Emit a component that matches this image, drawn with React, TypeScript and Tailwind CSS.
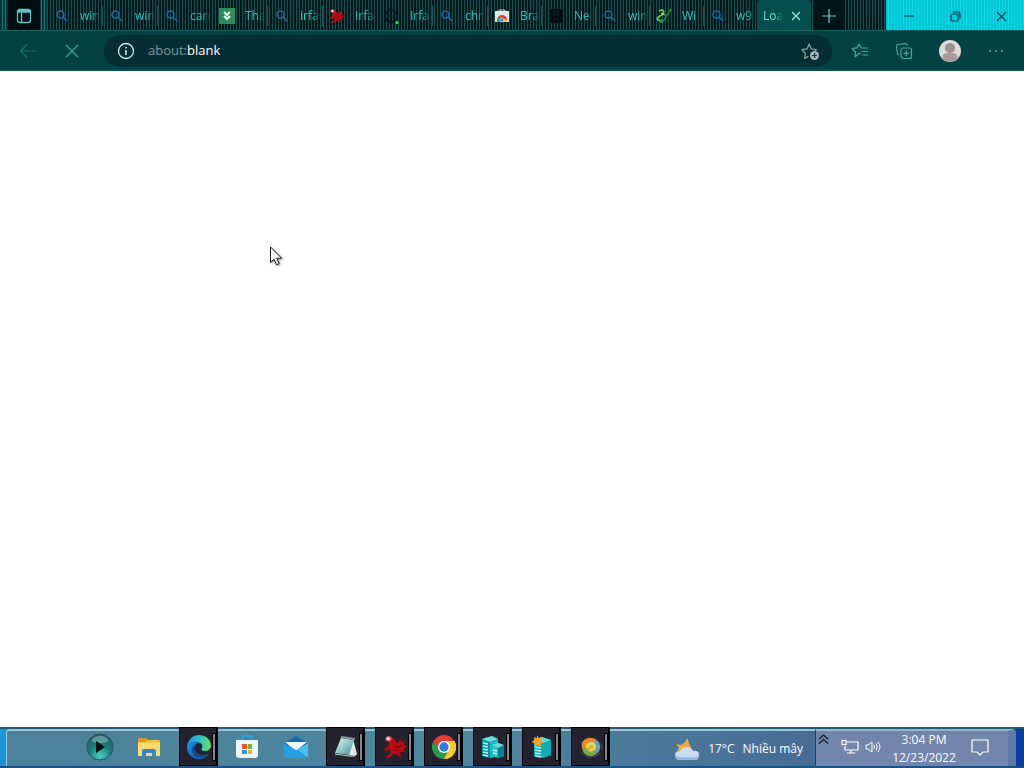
import React from 'react';

type Tab = { title: string; icon: string; wide?: boolean };

const TABS: Tab[] = [
	{ title: 'win', icon: 'search', wide: true },
	{ title: 'win', icon: 'search', wide: true },
	{ title: 'can', icon: 'search', wide: true },
	{ title: 'Tha', icon: 'down', wide: true },
	{ title: 'irfa', icon: 'search', wide: true },
	{ title: 'Irfa', icon: 'cat', wide: true },
	{ title: 'Irfa', icon: 'dot', wide: true },
	{ title: 'chr', icon: 'search', wide: true },
	{ title: 'Bra', icon: 'webstore' },
	{ title: 'Ne', icon: 'dark' },
	{ title: 'win', icon: 'search' },
	{ title: 'Wi', icon: 'leaf' },
	{ title: 'w9', icon: 'search' },
];

const CatShape = () => (
	<>
		<path d="M3 5c1-3 5-3 7-1 2 1 2 4 4 5l3-4 1 3 3-2-1 4 3 2-3 2 1 3-3 0c-1 1-2 1-3 1l3 3-2 1-4-3-3 1c-1 2-3 3-5 3l-1-2 4-2 1-3-3-1-3 2-1-2 3-3 2-1-1-3z" fill="#b90c10" />
		<path d="M2 5c0-3 4-4 6-2 1 2 0 4-2 4s-3 0-4-2z" fill="#d8545a" />
		<circle cx="5" cy="4.500" r="1.500" fill="#fff" />
		<path d="M10 11l4 2 5-2M11 15l3 1" stroke="#7a060a" fill="none" />
	</>
);

const TabIcon: React.FC<{ name: string }> = ({ name }) => {
	switch (name) {
		case 'search':
			return <svg width="16" height="16" viewBox="0 0 16 16" fill="none" stroke="#2268b0" strokeWidth="1.5"><circle cx="6.5" cy="6.5" r="3.5" /><path d="M9.2 9.2l4 4" /></svg>;
		case 'down':
			return <svg width="16" height="16" viewBox="0 0 16 16"><path d="M0 0h16v16H0z" fill="#2e8b57" /><path d="M5 4l3 3 3-3M5 8l3 3 3-3" stroke="#e5ffe9" strokeWidth="2" fill="none" /></svg>;
		case 'cat':
			return <svg width="16" height="16" viewBox="0 0 24 24"><CatShape /></svg>;
		case 'dot':
			return <svg width="16" height="16" viewBox="0 0 16 16"><circle cx="7" cy="8" r="6" fill="none" stroke="#061a24" strokeWidth="2" /><circle cx="13" cy="14.5" r="1.5" fill="#38d83c" /></svg>;
		case 'webstore':
			return (
				<svg width="16" height="16" viewBox="0 0 16 16">
					<path d="M5 4V2h6v2" stroke="#c6d4d3" fill="none" />
					<path d="M1 3h14v11H1z" fill="#dfe8e8" />
					<path d="M3 14v-2a5 5 0 0110 0v2z" fill="#e53935" />
					<path d="M3 14v-2l2-3 3 5z" fill="#2fa24c" />
					<path d="M8 14l2-3 3 1v2z" fill="#fbc21d" />
					<circle cx="8" cy="12" r="2" fill="#3c7be0" stroke="#fff" strokeWidth=".6" />
				</svg>
			);
		case 'dark':
			return <svg width="16" height="16" viewBox="0 0 16 16"><path d="M2 1h12v14H2z" fill="#020b0f" /><path d="M5 4h6M5 7h6M5 11h6" stroke="#0a2c30" /></svg>;
		default:
			return <svg width="16" height="16" viewBox="0 0 16 16" fill="none"><path d="M3 3c6-3 6 3 1 5s-2 6 2 4" stroke="#66cb4c" strokeWidth="1.8" /><path d="M15 1L8 12c-3 4-5 2-3 0" stroke="#248d43" strokeWidth="1.5" /><path d="M5 5l4 2" stroke="#dff2a8" /></svg>;
	}
};

const Toolbar = () => (
	<div className="flex h-10 shrink-0 items-center border-b-2 border-[#0c4c50] bg-[#034144] pt-px pl-4 text-[#5bb9aa]">
		<button aria-label="Back" className="flex w-6 justify-center text-[#19706c]">
			<svg width="18" height="16" viewBox="0 0 18 16" fill="none" stroke="currentColor" strokeWidth="1.2"><path d="M17 8H2M8 1.5L1.5 8 8 14.500" /></svg>
		</button>
		<button aria-label="Stop loading" className="ml-5 flex w-6 justify-center">
			<svg width="14" height="14" viewBox="0 0 14 14" stroke="#43a69c" strokeWidth="1.2"><path d="M1 1l12 12M13 1L1 13" /></svg>
		</button>
		<div className="ml-5 flex h-8 min-w-0 flex-1 items-center rounded-full bg-[#052e34] px-3">
			<button aria-label="Site information" className="shrink-0">
				<svg width="20" height="20" viewBox="0 0 20 20" fill="none" stroke="#cfe8e6" strokeWidth="1.3"><circle cx="10" cy="10" r="7.500" /><path d="M10 9v5M10 6v1.500" strokeWidth="1.600" /></svg>
			</button>
			<a href="about:blank" className="ml-3 flex-1 pt-px text-[13px] text-[#7f9c9e]">about:<span className="text-white">blank</span></a>
			<button aria-label="Add to favorites" className="shrink-0">
				<svg width="20" height="20" viewBox="0 0 20 20" fill="none" stroke="#8ca9a8" strokeWidth="1.200" strokeLinejoin="round"><path d="M8.500 15.200L4.500 17.500l1-5L2 8.500l5-.6L9 3l2.300 4.900 5 .6-1.600 1.700" /><circle cx="14.500" cy="14.500" r="4.500" fill="#a0b6b5" stroke="none" /><path d="M14.500 12v5M12 14.500h5" stroke="#0b3437" /></svg>
			</button>
		</div>
		<div className="flex items-center px-[18px]">
			<button aria-label="Favorites" className="flex w-5 justify-center">
				<svg width="20" height="20" viewBox="0 0 20 20" fill="none" stroke="#43aa9c" strokeWidth="1.200" strokeLinejoin="round"><path d="M11 13l-2-.8L5 16l.5-5L2 7.500l4.800-.6L9 3l2 4h7M11.500 10.500H18M12.500 14H18" /></svg>
			</button>
			<button aria-label="Collections" className="ml-6 flex w-5 justify-center">
				<svg width="20" height="20" viewBox="0 0 20 20" fill="none" stroke="#43aa9c" strokeWidth="1.200"><rect x="7" y="7" width="10.500" height="10.500" rx="2" /><path d="M12.300 9.500v5.500M9.500 12.300H15M5 14l-1.500-.8L2.500 6c-.2-1.500.5-2.300 1.800-2.500L11 2.700c1.600-.2 2.300.5 2.500 2" /></svg>
			</button>
			<button aria-label="Profile" className="ml-6 flex w-6 justify-center">
				<svg width="24" height="24" viewBox="0 0 24 24"><circle cx="12" cy="12" r="11" fill="#dcd9d8" /><circle cx="12" cy="9" r="5" fill="#9d8f8c" /><path d="M4.500 19c0-5 3-5 7.500-5s7.500 0 7.500 5c-4 5-11 5-15 0z" fill="#a99b98" /></svg>
			</button>
			<button aria-label="Settings and more" className="ml-6 flex w-5 justify-center">
				<svg width="16" height="4" viewBox="0 0 16 4" fill="#5fb5a8"><circle cx="2" cy="2" r="1" /><circle cx="8" cy="2" r="1" /><circle cx="14" cy="2" r="1" /></svg>
			</button>
		</div>
	</div>
);

const TabStrip = () => (
	<div className="flex h-[31px] shrink-0 border-b border-[#14615e] bg-[repeating-linear-gradient(90deg,#02181b_0px,#02181b_2px,#145052_2px,#145052_3px)]">
		<div className="flex w-[47px] shrink-0 justify-center bg-[repeating-linear-gradient(90deg,#063438_0px,#063438_2px,#1c7c7c_2px,#1c7c7c_3px)]">
			<button aria-label="Tab actions" className="flex w-8 items-center justify-center bg-[#020d12] pt-0.5">
				<svg width="16" height="16" viewBox="0 0 16 16" fill="none" stroke="#59c4c9" strokeWidth="1.300"><rect x="1.500" y="1.500" width="13" height="13" rx="2" /><path d="M1.500 4h13M5.500 5v9.500" /><path d="M2 3h12" strokeWidth="2" /></svg>
			</button>
		</div>
		{TABS.map((t, i) => (
			<button key={i} className={`mt-1.5 mb-1 flex shrink-0 items-center border-l border-[#12585a] pl-1.5 ${t.wide ? 'w-[55px]' : 'w-[54px]'}`}>
				<span className="shrink-0"><TabIcon name={t.icon} /></span>
				<span className="ml-2.5 w-5 mask-r-from-60% text-left text-xs whitespace-nowrap text-[#33c2b5]">{t.title}</span>
			</button>
		))}
		<div className="flex w-[54px] shrink-0 items-center rounded-t bg-[#034f50] pt-0.5 pl-1.5">
			<button className="w-5 mask-r-from-60% text-left text-xs whitespace-nowrap text-[#6fe3c6]">Loa</button>
			<button aria-label="Close tab" className="ml-2"><svg width="10" height="10" viewBox="0 0 10 10" stroke="#94e5d5" strokeWidth="1.300"><path d="M1 1l8 8M9 1L1 9" /></svg></button>
		</div>
		<button aria-label="New tab" className="ml-1 flex w-7 shrink-0 items-center justify-center bg-[#031418] pt-0.5">
			<svg width="16" height="16" viewBox="0 0 16 16" stroke="#79c4cc" strokeWidth="1.200"><path d="M8 1v14M1 8h14" /></svg>
		</button>
		<div className="flex-1" />
		<div className="flex w-[138px] shrink-0 bg-[repeating-linear-gradient(90deg,#06c6d6_0px,#06c6d6_2px,#0bd8e5_2px,#0bd8e5_3px)] pt-0.5">
			<button aria-label="Minimize" className="flex flex-1 items-center justify-center"><svg width="10" height="10" viewBox="0 0 10 10" stroke="#063c52" strokeWidth="1.200"><path d="M0 5h10" /></svg></button>
			<button aria-label="Restore" className="flex flex-1 items-center justify-center"><svg width="11" height="11" viewBox="0 0 11 11" fill="none" stroke="#063c52" strokeWidth="1.200"><rect x="1" y="3" width="7" height="7" rx="1" /><path d="M3 1h5.500Q10 1 10 2.500V8" /></svg></button>
			<button aria-label="Close" className="flex flex-1 items-center justify-center"><svg width="11" height="11" viewBox="0 0 11 11" stroke="#063c52" strokeWidth="1.200"><path d="M1 1l9 9M10 1l-9 9" /></svg></button>
		</div>
	</div>
);

const Play = () => (
	<svg width="28" height="28" viewBox="0 0 28 28">
		<defs><radialGradient id="orb" cx=".5" cy=".85" r=".8"><stop stopColor="#55cfc2" /><stop offset=".55" stopColor="#197c7a" /><stop offset="1" stopColor="#2c5a63" /></radialGradient></defs>
		<circle cx="14" cy="14" r="13" fill="url(#orb)" stroke="#245761" />
		<path d="M5 8c4-7 14-7 18 0-5 3-12 3-18 0z" fill="#8ec6c4" opacity=".5" />
		<path d="M10 8l9 6-9 6z" fill="#030f12" />
	</svg>
);

const Folder = () => (
	<svg width="24" height="24" viewBox="0 0 24 24"><path d="M1 4q0-1 1-1h7l2 2h10q2 0 2 2v13H1z" fill="#f2c343" /><path d="M1 4q0-1 1-1h7l2 2-3 2H1z" fill="#dc982c" /><path d="M1 8h22v13H1z" fill="#fadb6e" /><path d="M5 21v-5q0-2 2-2h10q2 0 2 2v5h-4v-3H9v3z" fill="#3a85c4" /></svg>
);

const Edge = () => (
	<svg width="26" height="26" viewBox="0 0 26 26">
		<defs>
			<linearGradient id="edgeTop" x1="0" x2="1"><stop stopColor="#2196df" /><stop offset=".5" stopColor="#29c0ca" /><stop offset="1" stopColor="#69df58" /></linearGradient>
			<linearGradient id="edgeLow" x1="0" y1="0" x2="1" y2="1"><stop stopColor="#168fd9" /><stop offset="1" stopColor="#1556ac" /></linearGradient>
		</defs>
		<path d="M1 13C2 5 7 1 13 1c7 0 12 5 12 10 0 4-3 6-6 6-4 0-4-2-3-3 1-2 0-6-6-6-4 0-7 2-9 5z" fill="url(#edgeTop)" />
		<path d="M1 13C2 8 8 6 12 9c-5 1-5 13 6 12 2 0 4-1 5-2-2 4-6 6-10 6C6 25 1 20 1 13z" fill="url(#edgeLow)" />
		<path d="M9 14c0 8 8 9 14 5-5 6-15 6-17-1-1-4 2-8 6-9-2 1-3 3-3 5z" fill="#0e478e" />
	</svg>
);

const Store = () => (
	<svg width="24" height="24" viewBox="0 0 24 24"><path d="M7 6V3q0-2 2-2h6q2 0 2 2v3" fill="none" stroke="#29a0e0" strokeWidth="2" /><path d="M1 5h22v15q0 3-3 3H4q-3 0-3-3z" fill="#eef6f9" /><path d="M7 9h5v5H7z" fill="#e8572c" /><path d="M13 9h4v5h-4z" fill="#77b72e" /><path d="M7 15h5v4H7z" fill="#219edb" /><path d="M13 15h4v4h-4z" fill="#efb323" /></svg>
);

const Mail = () => (
	<svg width="26" height="24" viewBox="0 0 26 24"><path d="M1 8L13 1l12 7v13q0 2-2 2H3q-2 0-2-2z" fill="#1269b5" /><path d="M2 7h22L13 16z" fill="#eef6fb" /><path d="M1 8l24 14q-1 1-2 1H3q-2 0-2-2z" fill="#229fe5" /><path d="M25 8v13q0 1-1 1l-10-7z" fill="#4bc1f3" /></svg>
);

const Notepad = () => (
	<svg width="24" height="24" viewBox="0 0 24 24">
		<defs><linearGradient id="note" x1="0" y1="0" x2="1" y2="1"><stop stopColor="#e3f5f2" /><stop offset=".5" stopColor="#8fc8ca" /><stop offset="1" stopColor="#418890" /></linearGradient></defs>
		<path d="M19 4l4 15-2 2-8-1z" fill="#dfe8e6" />
		<path d="M7 3l13 2-5 15-14-2z" fill="url(#note)" />
		<path d="M7 2l14 2" stroke="#7f9ca0" strokeWidth="2" />
		<path d="M1 19l13 2 7 0" stroke="#bfd0cf" fill="none" />
	</svg>
);

const Cat = () => <svg width="25" height="25" viewBox="0 0 24 24"><CatShape /></svg>;

const Chrome = () => (
	<svg width="26" height="26" viewBox="0 0 26 26"><path d="M13 13L2.600 7A12 12 0 0123.400 7z" fill="#de4033" /><path d="M13 13l10.400-6A12 12 0 0113 25z" fill="#fbc91f" /><path d="M13 13v12A12 12 0 012.600 7z" fill="#269a4c" /><path d="M2.600 7L8 16l5-9z" fill="#de4033" /><path d="M8 16l5 9 5-9z" fill="#269a4c" /><path d="M18 16l-5 9A12 12 0 0023.400 7H13z" fill="#fbc91f" /><circle cx="13" cy="13" r="6" fill="#fff" /><circle cx="13" cy="13" r="4.700" fill="#347be0" /></svg>
);

const Servers = () => (
	<svg width="26" height="26" viewBox="0 0 26 26"><path d="M2 5l10-3 6 3v17L9 24l-7-2z" fill="#0b929e" /><path d="M2 5l10-3 6 3-8 3z" fill="#65e1de" /><path d="M10 8l8-3v17l-8 2z" fill="#1db9c0" /><path d="M12 11l6-2 6 2v11l-6 2-6-2z" fill="#26bcc4" /><path d="M12 11l6-2 6 2-6 3z" fill="#69dce0" /><path d="M18 14l6-3v11l-6 2z" fill="#078391" /><path d="M3 9l5 1M3 12l5 1M3 15l5 1M3 18l5 1M3 21l5 1M13 16l4 1M13 19l4 1" stroke="#b7fff4" strokeWidth="1.500" /></svg>
);

const ServerStar = () => (
	<svg width="26" height="26" viewBox="0 0 26 26"><path d="M5 6l8-3 9 3v15l-8 3-9-2z" fill="#13aeb8" /><path d="M5 6l8-3 9 3-8 3z" fill="#59dce0" /><path d="M14 9l8-3v15l-8 3z" fill="#12a9b8" /><path d="M6 13l6 1M6 16l6 1M6 19l6 1M6 22l6 1" stroke="#a6f4ea" strokeWidth="1.500" /><path d="M8 1l1.500 3L13 3l-1 3.500 2.500 1.500-3 1.500.5 3.500L8.500 11 5.500 13 6 9.500 2.500 8 5.500 6 5 3l3 1z" fill="#f4a51e" /></svg>
);

const Swirl = () => (
	<svg width="26" height="26" viewBox="0 0 26 26" fill="none">
		<path d="M2 8c3 3 6-3 11-2 8 0 11 4 11 9M3 18c4 6 14 7 19 1" stroke="#34577d" strokeWidth="1" />
		<circle cx="13" cy="13" r="7" fill="#cfb13a" />
		<path d="M6 14C4 7 11 4 17 7" stroke="#e9862f" strokeWidth="4" />
		<path d="M17 7c4 3 4 8 1 11" stroke="#6ba0b4" strokeWidth="4" />
		<path d="M6 14c1 6 7 8 12 4" stroke="#79ab43" strokeWidth="4" />
		<path d="M9 14c0-4 5-6 7-3s-2 6-4 4" stroke="#f0d64f" strokeWidth="2.500" />
	</svg>
);

const APPS = [
	{ name: 'Media Player', icon: <Play />, open: false },
	{ name: 'File Explorer', icon: <Folder />, open: false },
	{ name: 'Microsoft Edge', icon: <Edge />, open: true },
	{ name: 'Microsoft Store', icon: <Store />, open: false },
	{ name: 'Mail', icon: <Mail />, open: false },
	{ name: 'Notepad', icon: <Notepad />, open: true },
	{ name: 'IrfanView', icon: <Cat />, open: true },
	{ name: 'Google Chrome', icon: <Chrome />, open: true },
	{ name: 'Servers', icon: <Servers />, open: true },
	{ name: 'New server', icon: <ServerStar />, open: true },
	{ name: 'Swirl', icon: <Swirl />, open: true },
];

const Taskbar = () => (
	<footer className="flex h-[41px] shrink-0 border-y-2 border-t-[#205b78] border-b-[#1c5384] bg-[linear-gradient(90deg,#1598dc,#247098_10%,#2c628b_60%,#0a3ca0)] pr-2 pl-1.5">
		<div className="flex min-w-0 flex-1 rounded-tl border-t-2 border-l border-[#9fc5d3] bg-[linear-gradient(90deg,#4b8199,#4d87a0_55%,#486c94)] pl-[68px]">
			{APPS.map((app) => (
				<button key={app.name} aria-label={app.name} className="flex w-[49px] shrink-0 items-start justify-center">
					{app.open ? (
						<span className="-mt-1 ml-0.5 flex h-[39px] w-[39px] items-center border border-black bg-[#24222f] pl-1.5">
							<span className="flex w-[26px] shrink-0 justify-center">{app.icon}</span>
							<span className="h-7 w-1 shrink-0 border border-black bg-[#858590]" />
							<span className="h-full w-px shrink-0 bg-black" />
						</span>
					) : (
						<span className="flex h-8 items-center">{app.icon}</span>
					)}
				</button>
			))}
			<button className="ml-auto flex items-center pr-3 text-xs whitespace-nowrap text-white">
				<svg width="26" height="24" viewBox="0 0 26 24"><path d="M11 5l2-4 3 7 2 4-8 3-7-1 2-3-3-4 5 1z" fill="#eba83e" /><path d="M5 23q-4-1-4-5t5-4q2-4 7-4 4 0 6 4 6-1 6 4 0 5-5 5z" fill="#cbdcf5" /><path d="M1 19q1 4 4 4h15q5 0 5-4-8 3-24 0z" fill="#96b8e7" /></svg>
				<span className="ml-2">17°C</span>
				<span className="ml-2">Nhiều mây</span>
			</button>
		</div>
		<div className="flex w-[201px] shrink-0 rounded-tr border-t-2 border-r-8 border-l border-t-[#9fb2ce] border-r-[#5e78a8] border-l-[#273c63] bg-[#7285aa] text-white">
			<button aria-label="Show hidden icons" className="ml-0.5 h-4"><svg width="11" height="11" viewBox="0 0 11 11" fill="none" stroke="#111a2b" strokeWidth="1.300"><path d="M1 5l4.500-4L10 5M1 9.500l4.500-4 4.500 4" /></svg></button>
			<button aria-label="Network" className="ml-3 flex h-8 items-center"><svg width="18" height="16" viewBox="0 0 18 16" fill="none" stroke="currentColor" strokeWidth="1.200"><path d="M6 3h11v8H4V7M10 11v3M6 14h8" /><rect x="1" y="1.500" width="4" height="4" /></svg></button>
			<button aria-label="Volume" className="ml-1.5 flex h-8 items-center"><svg width="16" height="16" viewBox="0 0 16 16" fill="none" stroke="currentColor"><path d="M1 6h2l4-3v10l-4-3H1zM9 6q1 2 0 4M11 4.500q2.500 3.500 0 7M13 3q4 5 0 10" /></svg></button>
			<button className="ml-2 w-[70px] text-center text-xs leading-[18px]">3:04 PM<br />12/23/2022</button>
			<button aria-label="Notifications" className="ml-3 flex h-8 items-center"><svg width="18" height="18" viewBox="0 0 18 18" fill="none" stroke="currentColor" strokeWidth="1.200"><path d="M1 2h16v12h-5l-3 3-3-3H1z" /></svg></button>
		</div>
	</footer>
);

const App: React.FC = () => (
	<div className="relative flex h-screen flex-col overflow-hidden bg-white font-['Open_Sans','Noto_Sans',sans-serif]">
		<TabStrip />
		<Toolbar />
		<main className="flex-1 bg-white" />
		<Taskbar />
		<svg className="pointer-events-none absolute top-[246px] left-[269px] drop-shadow-[1px_1px_1px_#999]" width="14" height="21" viewBox="0 0 14 21"><path d="M1.500 1v15.500l3.500-3.300 2.500 5.600 2.700-1.200-2.500-5.400h5z" fill="#fff" stroke="#171717" /></svg>
	</div>
);

export default App;
